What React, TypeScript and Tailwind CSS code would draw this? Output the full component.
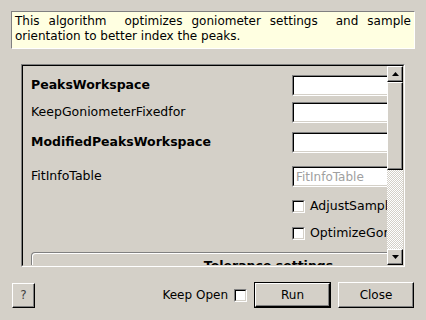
import React from 'react';

const raised =
  'border border-t-white border-l-white border-b-black border-r-black shadow-[inset_-1px_-1px_#808080]';

function Field({ placeholder }: { placeholder?: string }) {
  return (
    <div className="h-[21px] w-[130px] border border-t-[#808080] border-l-[#808080] border-b-white border-r-white">
      <div className="flex h-full items-center border border-t-black border-l-black border-b-[#d4d0c8] border-r-[#d4d0c8] bg-white pl-[2px] text-[12px] text-[#a0a0a0]">
        {placeholder}
      </div>
    </div>
  );
}

function Check() {
  return (
    <span className="block h-[13px] w-[13px] border border-t-[#808080] border-l-[#808080] border-b-white border-r-white">
      <span className="block h-full w-full border border-t-black border-l-black border-b-[#d4d0c8] border-r-[#d4d0c8] bg-white" />
    </span>
  );
}

function Arrow({ up }: { up?: boolean }) {
  return (
    <svg width="7" height="4" viewBox="0 0 7 4">
      <path d={up ? 'M0 4 L3.5 0 L7 4 Z' : 'M0 0 L3.5 4 L7 0 Z'} fill="#000" />
    </svg>
  );
}

function ScrollBar() {
  return (
    <div className="flex w-[16px] flex-col">
      <div className={`flex h-[16px] items-center justify-center ${raised}`}>
        <Arrow up />
      </div>
      <div className={`h-[88px] ${raised} bg-[#d4d0c8]`} />
      <div className="flex-1 bg-[image:repeating-conic-gradient(#ffffff_0%_25%,#d4d0c8_0%_50%)] bg-[length:2px_2px]" />
      <div className={`flex h-[16px] items-center justify-center ${raised}`}>
        <Arrow />
      </div>
    </div>
  );
}

export default function App() {
  const rows = [
    { label: 'PeaksWorkspace', bold: true, mt: 'mt-[9px]' },
    { label: 'KeepGoniometerFixedfor', bold: false, mt: 'mt-[6px]' },
    { label: 'ModifiedPeaksWorkspace', bold: true, mt: 'mt-[9px]' },
    { label: 'FitInfoTable', bold: false, mt: 'mt-[13px]', placeholder: 'FitInfoTable' },
  ];
  return (
    <div
      className="flex h-[320px] w-[426px] flex-col bg-[#d4d0c8] text-[#000] overflow-hidden"
      style={{ fontFamily: '"DejaVu Sans", "Liberation Sans", sans-serif' }}
    >
      <div className="mx-[11px] mt-[11px] h-[38px] border border-t-[#808080] border-l-[#808080] border-b-white border-r-white bg-[#ffffe1] px-[3px] pt-[2px] text-[12px] leading-[15px] whitespace-pre-wrap text-justify">
        {'This algorithm  optimizes goniometer settings  and sample orientation to better index the peaks.'}
      </div>

      <div className="ml-[21px] mt-[15px] h-[203px] w-[384px] border border-t-[#808080] border-l-[#808080] border-b-white border-r-white">
        <div className="flex h-full border border-t-black border-l-black border-b-[#d4d0c8] border-r-[#d4d0c8]">
          <div className="flex-1 overflow-hidden">
            <div className="flex w-[500px] flex-col text-[12.5px]">
              {rows.map((r) => (
                <div key={r.label} className={`flex items-center ${r.mt}`}>
                  <span className={`w-[269px] pl-[8px] ${r.bold ? 'font-bold' : ''}`}>{r.label}</span>
                  <Field placeholder={r.placeholder} />
                </div>
              ))}
              <label className="mt-[10px] flex items-center gap-[5px] pl-[269px]">
                <Check />
                <span>AdjustSampleOffsets</span>
              </label>
              <label className="mt-[8px] flex items-center gap-[5px] pl-[269px]">
                <Check />
                <span>OptimizeGoniometerTilt</span>
              </label>
              <div className="ml-[8px] mt-[9px] h-[40px] w-[474px] rounded-tl-[4px] border-l border-t border-[#808080] shadow-[inset_1px_1px_#ffffff]">
                <div className="pt-[4px] text-center font-bold">Tolerance settings</div>
              </div>
            </div>
          </div>
          <ScrollBar />
        </div>
      </div>

      <div className="mt-[15px] flex items-center px-[12px] text-[12px]">
        <button className={`h-[25px] w-[23px] ${raised} text-[#404040]`}>?</button>
        <div className="ml-auto flex items-center">
          <span>Keep Open</span>
          <span className="ml-[6px]">
            <Check />
          </span>
          <div className="ml-[7px] border border-black">
            <button className={`block h-[24px] w-[75px] ${raised}`}>Run</button>
          </div>
          <button className={`ml-[7px] h-[26px] w-[76px] ${raised}`}>Close</button>
        </div>
      </div>
    </div>
  );
}
